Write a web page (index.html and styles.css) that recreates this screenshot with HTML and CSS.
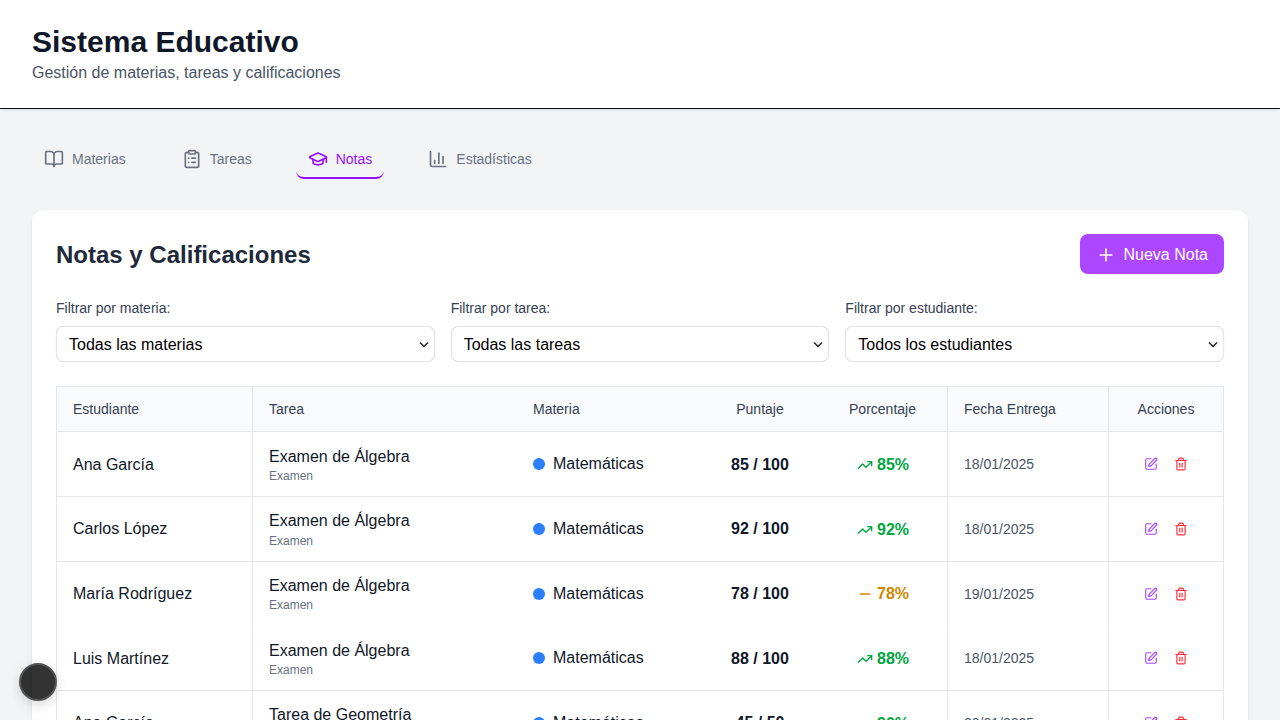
FILE: index.html
```html
<!DOCTYPE html>
<html lang="es">
<head>
<meta charset="utf-8">
<title>Sistema Educativo</title>
<link rel="stylesheet" href="styles.css">
</head>
<body>
<svg class="sprite" width="0" height="0" aria-hidden="true">
  <defs>
    <symbol id="i-book" viewBox="0 0 24 24"><path d="M12 7v14"/><path d="M3 18a1 1 0 0 1-1-1V4a1 1 0 0 1 1-1h5a4 4 0 0 1 4 4 4 4 0 0 1 4-4h5a1 1 0 0 1 1 1v13a1 1 0 0 1-1 1h-6a3 3 0 0 0-3 3 3 3 0 0 0-3-3z"/></symbol>
    <symbol id="i-clip" viewBox="0 0 24 24"><rect x="8" y="2" width="8" height="4" rx="1" ry="1"/><path d="M16 4h2a2 2 0 0 1 2 2v14a2 2 0 0 1-2 2H6a2 2 0 0 1-2-2V6a2 2 0 0 1 2-2h2"/><path d="M12 11h4"/><path d="M12 16h4"/><path d="M8 11h.01"/><path d="M8 16h.01"/></symbol>
    <symbol id="i-cap" viewBox="0 0 24 24"><path d="M21.42 10.922a1 1 0 0 0-.019-1.838L12.83 5.18a2 2 0 0 0-1.66 0L2.6 9.08a1 1 0 0 0 0 1.832l8.57 3.908a2 2 0 0 0 1.66 0z"/><path d="M22 10v6"/><path d="M6 12.5V16a6 3 0 0 0 12 0v-3.5"/></symbol>
    <symbol id="i-chart" viewBox="0 0 24 24"><path d="M3 3v16a2 2 0 0 0 2 2h16"/><path d="M18 17V9"/><path d="M13 17V5"/><path d="M8 17v-3"/></symbol>
    <symbol id="i-plus" viewBox="0 0 24 24"><path d="M5 12h14"/><path d="M12 5v14"/></symbol>
    <symbol id="i-up" viewBox="0 0 24 24"><polyline points="22 7 13.5 15.5 8.5 10.5 2 17"/><polyline points="16 7 22 7 22 13"/></symbol>
    <symbol id="i-minus" viewBox="0 0 24 24"><path d="M5 12h14"/></symbol>
    <symbol id="i-edit" viewBox="0 0 24 24"><path d="M12 3H5a2 2 0 0 0-2 2v14a2 2 0 0 0 2 2h14a2 2 0 0 0 2-2v-7"/><path d="M18.375 2.625a1 1 0 0 1 3 3l-9.013 9.014a2 2 0 0 1-.853.505l-2.873.84a.5.5 0 0 1-.62-.62l.84-2.873a2 2 0 0 1 .506-.852z"/></symbol>
    <symbol id="i-trash" viewBox="0 0 24 24"><path d="M3 6h18"/><path d="M19 6v14c0 1-1 2-2 2H7c-1 0-2-1-2-2V6"/><path d="M8 6V4c0-1 1-2 2-2h4c1 0 2 1 2 2v2"/><line x1="10" x2="10" y1="11" y2="17"/><line x1="14" x2="14" y1="11" y2="17"/></symbol>
  </defs>
</svg>

<header class="app-header">
  <h1 class="app-title">Sistema Educativo</h1>
  <p class="app-subtitle">Gestión de materias, tareas y calificaciones</p>
</header>

<main class="app-main">
  <nav class="tabs">
    <a class="tab"><svg class="icon icon-20"><use href="#i-book"/></svg>Materias</a>
    <a class="tab"><svg class="icon icon-20"><use href="#i-clip"/></svg>Tareas</a>
    <a class="tab tab-active"><svg class="icon icon-20"><use href="#i-cap"/></svg>Notas</a>
    <a class="tab"><svg class="icon icon-20"><use href="#i-chart"/></svg>Estadísticas</a>
  </nav>

  <section class="card">
    <div class="card-head">
      <h2 class="card-title">Notas y Calificaciones</h2>
      <button class="btn-primary" type="button"><svg class="icon icon-20"><use href="#i-plus"/></svg>Nueva Nota</button>
    </div>

    <div class="filters">
      <div class="filter">
        <label class="filter-label" for="f1">Filtrar por materia:</label>
        <select class="filter-select" id="f1"><option>Todas las materias</option></select>
      </div>
      <div class="filter">
        <label class="filter-label" for="f2">Filtrar por tarea:</label>
        <select class="filter-select" id="f2"><option>Todas las tareas</option></select>
      </div>
      <div class="filter">
        <label class="filter-label" for="f3">Filtrar por estudiante:</label>
        <select class="filter-select" id="f3"><option>Todos los estudiantes</option></select>
      </div>
    </div>

    <div class="table-wrap">
      <table class="grades">
        <colgroup>
          <col class="c-student"><col class="c-task"><col class="c-subject"><col class="c-score"><col class="c-pct"><col class="c-date"><col class="c-actions">
        </colgroup>
        <thead>
          <tr>
            <th class="div">Estudiante</th>
            <th>Tarea</th>
            <th>Materia</th>
            <th class="center">Puntaje</th>
            <th class="center div">Porcentaje</th>
            <th class="div">Fecha Entrega</th>
            <th class="center">Acciones</th>
          </tr>
        </thead>
        <tbody>
          <tr>
            <td class="div lift">Ana García</td>
            <td><div class="task">Examen de Álgebra</div><div class="task-type">Examen</div></td>
            <td><span class="subject"><i class="dot"></i>Matemáticas</span></td>
            <td class="center score lift">85 / 100</td>
            <td class="center div"><span class="pct good"><svg class="icon icon-16"><use href="#i-up"/></svg>85%</span></td>
            <td class="div date">18/01/2025</td>
            <td class="center"><span class="actions"><button class="act act-edit" type="button"><svg class="icon icon-14"><use href="#i-edit"/></svg></button><button class="act act-del" type="button"><svg class="icon icon-14"><use href="#i-trash"/></svg></button></span></td>
          </tr>
          <tr>
            <td class="div lift">Carlos López</td>
            <td><div class="task">Examen de Álgebra</div><div class="task-type">Examen</div></td>
            <td><span class="subject"><i class="dot"></i>Matemáticas</span></td>
            <td class="center score lift">92 / 100</td>
            <td class="center div"><span class="pct good"><svg class="icon icon-16"><use href="#i-up"/></svg>92%</span></td>
            <td class="div date">18/01/2025</td>
            <td class="center"><span class="actions"><button class="act act-edit" type="button"><svg class="icon icon-14"><use href="#i-edit"/></svg></button><button class="act act-del" type="button"><svg class="icon icon-14"><use href="#i-trash"/></svg></button></span></td>
          </tr>
          <tr class="no-line">
            <td class="div lift">María Rodríguez</td>
            <td><div class="task">Examen de Álgebra</div><div class="task-type">Examen</div></td>
            <td><span class="subject"><i class="dot"></i>Matemáticas</span></td>
            <td class="center score lift">78 / 100</td>
            <td class="center div"><span class="pct mid"><svg class="icon icon-16"><use href="#i-minus"/></svg>78%</span></td>
            <td class="div date">19/01/2025</td>
            <td class="center"><span class="actions"><button class="act act-edit" type="button"><svg class="icon icon-14"><use href="#i-edit"/></svg></button><button class="act act-del" type="button"><svg class="icon icon-14"><use href="#i-trash"/></svg></button></span></td>
          </tr>
          <tr>
            <td class="div lift">Luis Martínez</td>
            <td><div class="task">Examen de Álgebra</div><div class="task-type">Examen</div></td>
            <td><span class="subject"><i class="dot"></i>Matemáticas</span></td>
            <td class="center score lift">88 / 100</td>
            <td class="center div"><span class="pct good"><svg class="icon icon-16"><use href="#i-up"/></svg>88%</span></td>
            <td class="div date">18/01/2025</td>
            <td class="center"><span class="actions"><button class="act act-edit" type="button"><svg class="icon icon-14"><use href="#i-edit"/></svg></button><button class="act act-del" type="button"><svg class="icon icon-14"><use href="#i-trash"/></svg></button></span></td>
          </tr>
          <tr>
            <td class="div lift">Ana García</td>
            <td><div class="task">Tarea de Geometría</div><div class="task-type">Tarea</div></td>
            <td><span class="subject"><i class="dot"></i>Matemáticas</span></td>
            <td class="center score lift">45 / 50</td>
            <td class="center div"><span class="pct good"><svg class="icon icon-16"><use href="#i-up"/></svg>90%</span></td>
            <td class="div date">20/01/2025</td>
            <td class="center"><span class="actions"><button class="act act-edit" type="button"><svg class="icon icon-14"><use href="#i-edit"/></svg></button><button class="act act-del" type="button"><svg class="icon icon-14"><use href="#i-trash"/></svg></button></span></td>
          </tr>
        </tbody>
      </table>
    </div>
  </section>
</main>

<div class="float-dot"></div>
</body>
</html>
```

FILE: styles.css
```css
* { box-sizing: border-box; }
html, body { margin: 0; padding: 0; height: 100%; overflow: hidden; }
body {
  background: #f3f4f6;
  color: #101828;
  font-family: "Liberation Sans", Arial, sans-serif;
  font-size: 16px;
  line-height: 24px;
}
.sprite { position: absolute; }
.icon {
  display: block;
  flex: none;
  fill: none;
  stroke: currentColor;
  stroke-width: 2;
  stroke-linecap: round;
  stroke-linejoin: round;
}
.icon-20 { width: 20px; height: 20px; }
.icon-16 { width: 16px; height: 16px; }
.icon-14 { width: 14px; height: 14px; }

.app-header {
  background: #fff;
  padding: 24px 32px 23px;
  border-bottom: 1px solid #101010;
  box-shadow: 0 1px 3px rgba(0, 0, 0, .1);
}
.app-title { margin: 0 0 1px; font-size: 30px; line-height: 36px; font-weight: 700; color: #101828; }
.app-subtitle { margin: 0; font-size: 16px; line-height: 24px; color: #4a5565; }

.app-main { padding: 31.5px 32px 32px; }

.tabs { display: flex; gap: 32px; margin-bottom: 31.5px; }
.tab {
  display: flex;
  align-items: center;
  gap: 8px;
  padding: 8px 12px;
  font-size: 14px;
  line-height: 20px;
  color: #6a7282;
  border-bottom: 2px solid transparent;
  border-radius: 8px;
}
.tab-active { color: #9810fa; border-bottom-color: #9810fa; }

.card {
  background: #fff;
  border-radius: 12px;
  padding: 24px;
  box-shadow: 0 4px 6px -1px rgba(0, 0, 0, .1), 0 2px 4px -2px rgba(0, 0, 0, .1);
}
.card-head { display: flex; align-items: center; justify-content: space-between; margin-bottom: 24px; }
.card-title { margin: 2px 0 0; font-size: 24px; line-height: 32px; font-weight: 700; color: #1e2939; }
.btn-primary {
  display: flex;
  align-items: center;
  gap: 8px;
  height: 40px;
  padding: 8.5px 16px 7.5px;
  border: 0;
  border-radius: 8px;
  background: #ad46ff;
  color: #fff;
  font: inherit;
}

.filters { display: grid; grid-template-columns: repeat(3, 1fr); gap: 16px; margin-bottom: 24.33px; }
.filter-label { display: block; margin-bottom: 8px; font-size: 14px; line-height: 20px; color: #364153; }
.filter-select {
  display: block;
  width: 100%;
  height: 36px;
  padding: 0 24px 0 12px;
  border: 1px solid #e5e7eb;
  border-radius: 8px;
  appearance: none;
  background: #fff url("data:image/svg+xml,%3Csvg xmlns='http://www.w3.org/2000/svg' width='10' height='7' viewBox='0 0 10 7'%3E%3Cpath d='M1 1.5 5 5.5 9 1.5' fill='none' stroke='%23222' stroke-width='1.5'/%3E%3C/svg%3E") no-repeat right 5px center;
  color: #000;
  font-family: inherit;
  font-size: 16px;
  box-shadow: 0 0 1px rgba(0, 0, 0, .2);
}

.table-wrap { border: 1px solid #e5e7eb; }
.grades { width: 100%; table-layout: fixed; border-collapse: separate; border-spacing: 0; }
.c-student { width: 196px; }
.c-task { width: 264px; }
.c-subject { width: 185px; }
.c-score { width: 116px; }
.c-pct { width: 130px; }
.c-date { width: 161px; }
.c-actions { width: 114px; }

.grades th {
  padding: 12px 16px;
  background: #f9fafb;
  border-bottom: 1px solid #e5e7eb;
  font-size: 14px;
  line-height: 20px;
  font-weight: 400;
  color: #364153;
  text-align: left;
}
.grades td { padding: 12.34px 16px 11.66px; border-bottom: 1px solid #e5e7eb; vertical-align: middle; }
.grades td.lift { padding-top: 12.59px; padding-bottom: 11.41px; }
.grades .center { text-align: center; }
.grades .div { border-right: 1px solid #e5e7eb; }
.grades .no-line td { border-bottom-color: transparent; }

.task { line-height: 24px; }
.task-type { margin-top: .5px; font-size: 12px; line-height: 15.17px; color: #6a7282; }
.subject { display: flex; align-items: center; gap: 8px; }
.dot { display: block; width: 12px; height: 12px; border-radius: 50%; background: #2b7fff; }
.score { font-weight: 700; }
.pct { display: inline-flex; align-items: center; gap: 4px; margin-left: 1px; font-weight: 700; vertical-align: middle; }
.good { color: #00a63e; }
.mid { color: #d08700; }
.date { font-size: 14px; color: #4a5565; }
.actions { display: inline-flex; align-items: center; vertical-align: middle; }
.act { display: block; padding: 8px; border: 0; border-radius: 4px; background: transparent; }
.act-edit { color: #ad46ff; }
.act-del { color: #fb2c36; }

.float-dot {
  position: fixed;
  left: 19px;
  bottom: 19px;
  width: 38px;
  height: 38px;
  border-radius: 50%;
  border: 2px solid #555;
  background: rgba(0, 0, 0, .8);
  box-shadow: 0 4px 12px rgba(0, 0, 0, .15);
}
```
